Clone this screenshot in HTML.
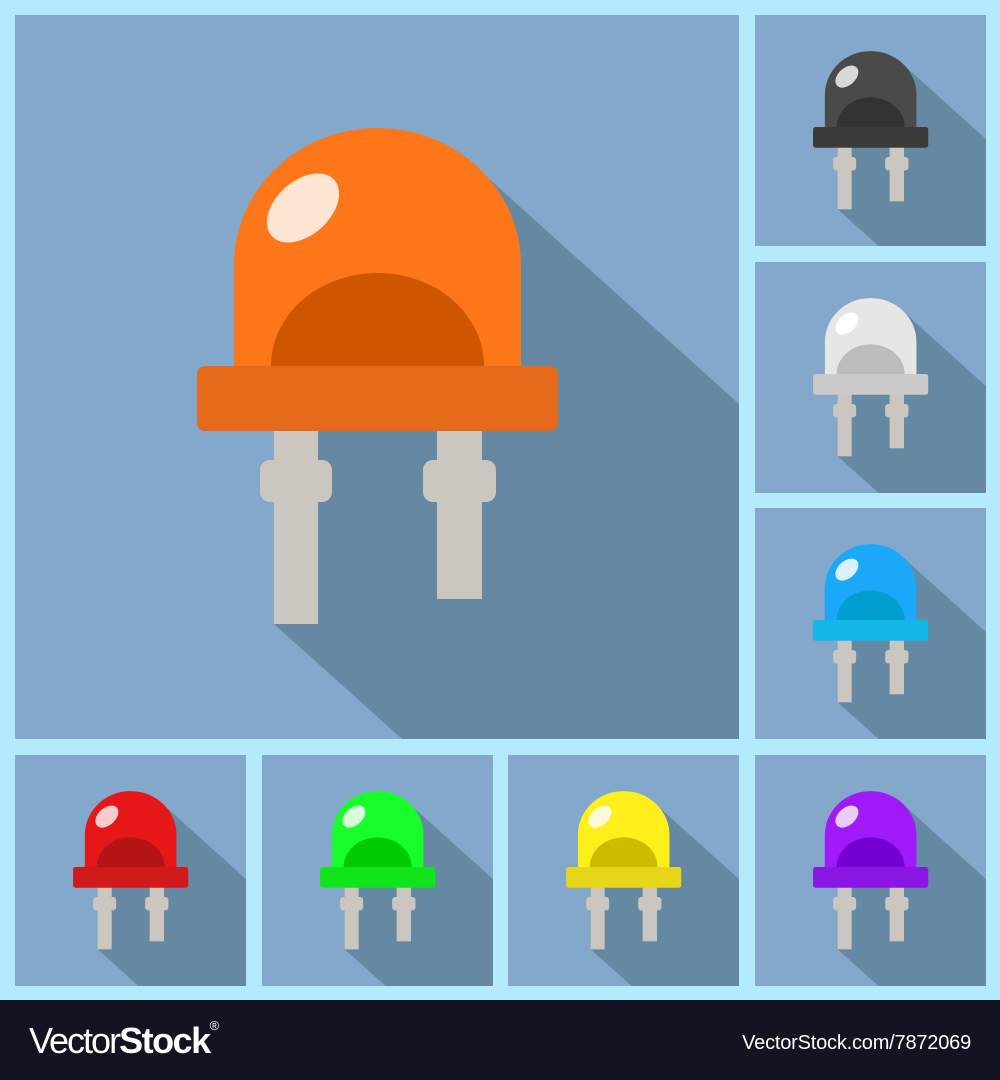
<!DOCTYPE html>
<html><head><meta charset="utf-8">
<style>
html,body{margin:0;padding:0;width:1000px;height:1080px;overflow:hidden}
body{background:#b3ebfd;position:relative;font-family:"Liberation Sans",sans-serif}
svg.p{position:absolute;display:block}
.foot{position:absolute;left:0;top:1000px;width:1000px;height:80px;background:#121421;color:#fff}
.logo{position:absolute;left:29px;top:20px;font-size:36px;letter-spacing:-2px;font-weight:300}
.logo b{font-weight:700;letter-spacing:-1.5px}
.logo sup{font-size:13px;vertical-align:top;position:relative;top:-2px;letter-spacing:0}
.url{position:absolute;right:29px;top:32px;font-size:20px;letter-spacing:-0.2px}
</style></head><body>
<svg width="0" height="0" style="position:absolute;left:0;top:0">
<symbol id="led" viewBox="0 0 724 724">
<rect width="724" height="724" fill="#84a8cb"/>
<polygon points="463,154 724,389 724,724 387,724 259,609 259,416 219,351 219,250" fill="#6589a2"/>
<rect x="259" y="410" width="44" height="199" fill="#ccc6c0"/>
<rect x="245" y="445" width="72" height="42" rx="10" fill="#ccc6c0"/>
<rect x="422" y="410" width="45" height="174" fill="#ccc6c0"/>
<rect x="408" y="445" width="73" height="42" rx="10" fill="#ccc6c0"/>
<path d="M219,355 V250 A143.5,137 0 0 1 506,250 V355 Z" fill="var(--d)"/>
<path d="M256,355 V351 A106.5,93 0 0 1 469,351 V355 Z" fill="var(--i)"/>
<ellipse cx="288" cy="193" rx="42" ry="27" transform="rotate(-42 288 193)" fill="var(--h)"/>
<rect x="182" y="351" width="361" height="65" rx="8" fill="var(--b)"/>
</symbol>
</svg>

<svg class="p" style="left:15px;top:15px;--d:#fe761a;--i:#cf5500;--b:#e46918;--h:#fde5d3" width="724" height="724"><use href="#led"/></svg>
<svg class="p" style="left:755px;top:15px;--d:#4a4a4a;--i:#333333;--b:#3a3a3a;--h:#d8d8d8" width="231" height="231" viewBox="0 0 724 724"><use href="#led"/></svg>
<svg class="p" style="left:755px;top:262px;--d:#e6e6e6;--i:#bcbcbc;--b:#cacaca;--h:#ffffff" width="231" height="231" viewBox="0 0 724 724"><use href="#led"/></svg>
<svg class="p" style="left:755px;top:508px;--d:#1ba8f8;--i:#019ed0;--b:#13b6e8;--h:#d8f0ff" width="231" height="231" viewBox="0 0 724 724"><use href="#led"/></svg>
<svg class="p" style="left:755px;top:755px;--d:#a01af8;--i:#7300d2;--b:#8a16e4;--h:#e8cdfd" width="231" height="231" viewBox="0 0 724 724"><use href="#led"/></svg>
<svg class="p" style="left:15px;top:755px;--d:#e51717;--i:#b41414;--b:#d01919;--h:#f8cccc" width="231" height="231" viewBox="0 0 724 724"><use href="#led"/></svg>
<svg class="p" style="left:262px;top:755px;--d:#18fe28;--i:#00cc00;--b:#12e41c;--h:#d6fdd6" width="231" height="231" viewBox="0 0 724 724"><use href="#led"/></svg>
<svg class="p" style="left:508px;top:755px;--d:#fff01c;--i:#cdbb00;--b:#e6d619;--h:#fffbd6" width="231" height="231" viewBox="0 0 724 724"><use href="#led"/></svg>

<div class="foot">
<div class="logo">Vector<b>Stock</b><sup>®</sup></div>
<div class="url">VectorStock.com/7872069</div>
</div>
</body></html>
